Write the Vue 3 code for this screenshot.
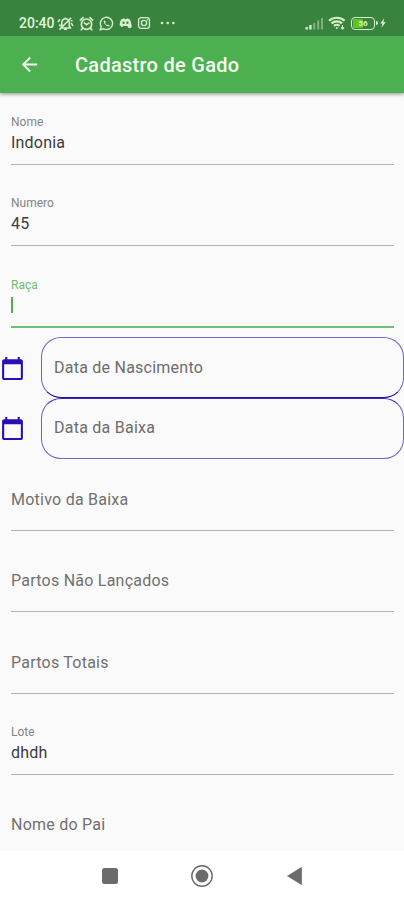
<script setup>
import { ref } from 'vue'

const before = ref([
  { label: 'Nome', value: 'Indonia' },
  { label: 'Numero', value: '45' },
  { label: 'Raça', value: '', focused: true },
])
const dates = ['Data de Nascimento', 'Data da Baixa']
const after = ref([
  { label: 'Motivo da Baixa', value: '' },
  { label: 'Partos Não Lançados', value: '' },
  { label: 'Partos Totais', value: '' },
  { label: 'Lote', value: 'dhdh' },
  { label: 'Nome do Pai', value: '' },
])
</script>

<template>
  <div class="screen">
    <header class="top">
      <div class="status">
        <span class="clock">20:40</span>
        <svg class="s-icon mute" viewBox="0 0 18 16" fill="none" stroke="currentColor" stroke-width="1.7" stroke-linejoin="round">
          <path d="M5 11.5V7a4 4 0 0 1 8 0v4l1.5 1.8H4zM7.3 14.2h3.4M9 3V1.5M2.5 14.5 15 1.8M1 6.5l2-3M17 10.5l-2-3M2 10h2M14.5 5h2" />
        </svg>
        <svg class="s-icon alarm" viewBox="0 0 16 16" fill="none" stroke="currentColor" stroke-width="1.8" stroke-linecap="round">
          <circle cx="8" cy="8.7" r="5.5" /><path d="M1.4 4.3 4.4 1.7M14.6 4.3l-3-2.6M3.8 13.2l-1.4 1.5M12.2 13.2l1.4 1.5M5.7 7.4 8 9.2l2.5-1.6" />
        </svg>
        <svg class="s-icon whats" viewBox="0 0 16 16" fill="none" stroke="currentColor" stroke-width="1.5">
          <path d="m1.4 14.6.9-3.5A6.5 6.5 0 1 1 5 13.7z" />
          <path d="M5.7 4.5c-1.4 1.1-.6 3.2 1.1 4.9s3.7 2.3 4.7.9L9.8 9l-1 .8C7.7 9.3 6.9 8.4 6.5 7.4l.8-1z" fill="currentColor" stroke="none" />
        </svg>
        <svg class="s-icon discord" viewBox="0 0 16 14">
          <path fill="currentColor" fill-rule="evenodd" d="M3 2.3 6.2 1l.6 1.2h2.4L9.8 1 13 2.3c1.3 2 2.2 4.1 2.3 7.4l-3.1 2.6-1.2-1.6H5l-1.2 1.6L.7 9.7C.8 6.4 1.7 4.3 3 2.3M5.6 5.2a1.4 1.5 0 1 0 0 3 1.4 1.5 0 0 0 0-3m4.8 0a1.4 1.5 0 1 0 0 3 1.4 1.5 0 0 0 0-3" />
          <circle cx="13.2" cy="11" r="2.4" fill="currentColor" />
        </svg>
        <svg class="s-icon insta" viewBox="0 0 16 16" fill="none" stroke="currentColor" stroke-width="1.5">
          <rect x="1.8" y="1.8" width="12.4" height="12.4" rx="3" /><circle cx="8" cy="8" r="3" /><path d="M11.2 4.5h1.3" />
        </svg>
        <svg class="more" viewBox="0 0 16 4" fill="currentColor">
          <circle cx="2" cy="2" r="1.3" /><circle cx="7.7" cy="2" r="1.3" /><circle cx="13.4" cy="2" r="1.3" />
        </svg>
        <svg class="signal" viewBox="0 0 19 13" fill="currentColor">
          <rect x="0.5" y="10" width="2.4" height="2.5" /><rect x="4.2" y="8" width="2.4" height="4.5" />
          <g opacity=".45"><rect x="8.2" y="6" width="2" height="6.5" /><rect x="12.2" y="3.5" width="2" height="9" /><rect x="16" y="1" width="2" height="11.5" /></g>
        </svg>
        <svg class="wifi" viewBox="0 0 18 14" fill="none" stroke="currentColor" stroke-width="2.1">
          <path d="M1 4.8a11.5 11.5 0 0 1 15.6 0M3.5 7.4a8 8 0 0 1 10.6 0M6 9.9a4.5 4.5 0 0 1 5.6 0" /><circle cx="8.8" cy="11.9" r="1" fill="currentColor" stroke="none" />
          <path d="M14.5 9v4m-1.5-1.5 1.5 1.5 1.7-1.5" stroke-width="1.1" />
        </svg>
        <span class="battery"><span class="level"></span><span class="pct">56</span></span>
        <svg class="bolt" viewBox="0 0 7 11"><path d="M4.8 0 .4 6h2.4L1.8 11 6.6 4.5H4z" fill="currentColor" /></svg>
      </div>
      <div class="bar">
        <svg class="back" viewBox="0 0 24 24"><path d="M20 11H7.83l5.59-5.59L12 4l-8 8 8 8 1.41-1.41L7.83 13H20z" fill="currentColor" /></svg>
        <h1>Cadastro de Gado</h1>
      </div>
    </header>

    <main class="form">
      <div v-for="f in before" :key="f.label" class="field" :class="{ focused: f.focused, filled: f.value || f.focused }">
        <label>{{ f.label }}</label>
        <div class="value">{{ f.value }}<i v-if="f.focused" class="caret"></i></div>
      </div>

      <div class="dates">
        <div v-for="d in dates" :key="d" class="date">
          <svg class="calendar" viewBox="0 0 24 24"><path d="M20 3h-1V1h-2v2H7V1H5v2H4c-1.1 0-2 .9-2 2v16c0 1.1.9 2 2 2h16c1.1 0 2-.9 2-2V5c0-1.1-.9-2-2-2m0 18H4V8h16z" fill="currentColor" /></svg>
          <div class="pill">{{ d }}</div>
        </div>
      </div>

      <div v-for="f in after" :key="f.label" class="field" :class="{ filled: f.value }">
        <label>{{ f.label }}</label>
        <div v-if="f.value" class="value">{{ f.value }}</div>
      </div>
    </main>

    <nav class="nav">
      <svg viewBox="0 0 24 24"><rect x="4" y="4" width="16" height="16" rx="2.5" fill="currentColor" /></svg>
      <svg viewBox="0 0 24 24"><circle cx="12" cy="12" r="10.2" fill="none" stroke="currentColor" stroke-width="1.4" /><circle cx="12" cy="12" r="6.4" fill="currentColor" /></svg>
      <svg viewBox="0 0 24 24"><path d="M4.5 12 18.6 3.2v17.6z" fill="currentColor" stroke="currentColor" stroke-width=".6" stroke-linejoin="round" /></svg>
    </nav>
  </div>
</template>

<style>
body { margin: 0; overflow: hidden; }
</style>

<style scoped>
* { box-sizing: border-box; }
.screen {
  width: 404px; height: 900px; display: flex; flex-direction: column;
  overflow: hidden; background: #fafafa; font-family: Roboto, sans-serif; color: #3c3c3c;
}
.top { flex: none; height: 93px; background: #4caf50; color: #f4fff0; box-shadow: 0 1px 4px rgba(0, 0, 0, .45); z-index: 1; }
.status { height: 36px; background: #39833e; display: flex; align-items: center; padding: 10px 18px 0 19px; color: #d5efcb; }
.clock { font-size: 14px; line-height: 16px; font-weight: 500; width: 38px; letter-spacing: 0; white-space: nowrap; color: #e2f5d9; }
.s-icon { flex: none; height: 15px; }
.mute { width: 17px; }
.alarm { width: 15px; margin-left: 5px; }
.whats { width: 15px; margin-left: 5px; }
.discord { width: 13px; height: 12px; margin-left: 5px; }
.insta { width: 14px; height: 14px; margin-left: 5px; }
.more { width: 16px; height: 4px; margin-left: 9px; }
.signal { width: 19px; height: 13px; margin-left: auto; margin-top: 1px; }
.wifi { width: 18px; height: 14px; margin-left: 4px; }
.battery {
  position: relative; width: 24px; height: 13px; margin-left: 5px; border: 1.5px solid currentColor; border-radius: 4px;
  display: flex; align-items: center; justify-content: center;
}
.battery::after { content: ''; position: absolute; right: -3.5px; top: 3px; width: 2px; height: 4px; background: currentColor; border-radius: 0 2px 2px 0; }
.level { position: absolute; left: 1px; top: 1px; bottom: 1px; width: 10px; background: #62c51e; border-radius: 1px; }
.pct { position: relative; font-size: 8px; line-height: 9px; font-weight: 700; }
.bolt { width: 6px; height: 10px; margin-left: 5px; }
.bar { height: 57px; display: flex; align-items: center; padding: 0 0 0 18px; }
.back { width: 23px; height: 23px; }
h1 { margin: 0 0 0 34px; font-size: 20px; line-height: 24px; font-weight: 500; letter-spacing: .28px; white-space: nowrap; }
.form { flex: none; height: 758px; overflow: hidden; }
.field { height: 72px; margin: 0 10px 9.4px 11px; padding-top: 31px; border-bottom: 1px solid #b4b4b4; }
.field label { display: block; font-size: 16px; line-height: 20px; letter-spacing: .24px; color: #707070; }
.field.filled { padding-top: 22px; }
.field.filled label { font-size: 12px; line-height: 14px; letter-spacing: 0; color: #858585; }
.value { height: 20px; margin-top: 4px; font-size: 16px; line-height: 20px; letter-spacing: .2px; }
.field.focused { border-bottom: 2px solid #6fbf73; }
.field.filled.focused label { color: #6fbe73; }
.caret { display: block; width: 2px; height: 16px; transform: translateY(1px); background: #4caf50; }
.dates { height: 121.6px; display: flex; flex-direction: column; }
.date { flex: 1; display: flex; align-items: center; }
.calendar { width: 25px; height: 25px; margin: 1px 16px 0 0; flex: none; color: #2a10b4; }
.pill {
  flex: 1; height: 100%; border: 1px solid #7264c4; border-radius: 20px; padding: 0 0 1px 12px;
  display: flex; align-items: center; font-size: 16px; letter-spacing: .24px; color: #6c6c6c;
}
.date:first-child .pill { border-bottom-color: #1c0cb0; }
.date:last-child .pill { border-top-color: #3a2cb4; }
.nav { flex: none; height: 49px; background: #fff; display: flex; align-items: center; justify-content: center; gap: 68.5px; color: #6b6b6b; }
.nav svg { width: 24px; height: 24px; flex: none; }
</style>
